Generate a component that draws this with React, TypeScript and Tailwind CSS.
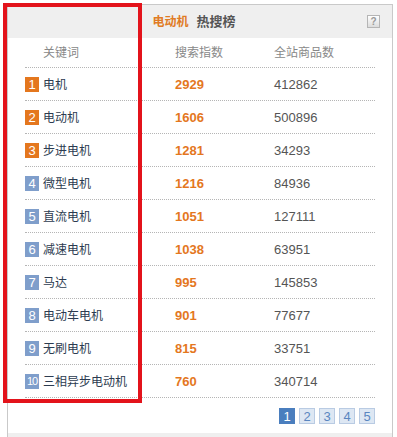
import React from "react";

const rows = [
  { k: "电机", s: "2929", g: "412862" },
  { k: "电动机", s: "1606", g: "500896" },
  { k: "步进电机", s: "1281", g: "34293" },
  { k: "微型电机", s: "1216", g: "84936" },
  { k: "直流电机", s: "1051", g: "127111" },
  { k: "减速电机", s: "1038", g: "63951" },
  { k: "马达", s: "995", g: "145853" },
  { k: "电动车电机", s: "901", g: "77677" },
  { k: "无刷电机", s: "815", g: "33751" },
  { k: "三相异步电动机", s: "760", g: "340714" },
];

export default function App() {
  return (
    <div
      className="relative w-[397px] h-[437px] overflow-hidden bg-white pt-[4px] pl-[7px]"
      style={{ fontFamily: '"Liberation Sans", "Noto Sans CJK SC", sans-serif' }}
    >
      <div className="w-[386px] border-t border-l border-r border-[#c9c9c9]">
        {/* header */}
        <div className="flex h-[33px] items-center bg-[#efefef]">
          <div className="flex-1" />
          <div className="flex items-center font-bold">
            <span className="text-[12px] text-[#e07b24]">电动机</span>
            <span className="ml-[8px] text-[13px] text-[#555]">热搜榜</span>
          </div>
          <div className="flex flex-1 justify-end pr-[12px]">
            <div className="flex h-[13px] w-[13px] items-center justify-center border border-[#b5b5b5] bg-gradient-to-b from-white to-[#dcdcdc] text-[10px] font-bold leading-none text-[#999]">
              ?
            </div>
          </div>
        </div>

        {/* table */}
        <div className="px-[17px]">
          <div className="grid h-[30px] grid-cols-[150px_99px_101px] items-center border-b border-dotted border-[#b5b5b5] text-[12px] text-[#888]">
            <div className="pl-[18px]">关键词</div>
            <div>搜索指数</div>
            <div>全站商品数</div>
          </div>
          {rows.map((r, i) => (
            <div
              key={i}
              className="grid h-[33px] grid-cols-[150px_99px_101px] items-center border-b border-dotted border-[#b5b5b5] pt-[1px]"
            >
              <div className="flex items-center">
                <span
                  className={
                    "flex h-[15px] w-[14px] items-center justify-center text-white leading-none " +
                    (i < 3 ? "bg-[#e4771e]" : "bg-[#7f9ecb]") +
                    (i === 9 ? " text-[11px] tracking-[-1px]" : " text-[13px]")
                  }
                >
                  {i + 1}
                </span>
                <span className="ml-[4px] text-[12px] text-[#2c3b50]">{r.k}</span>
              </div>
              <div className="text-[13px] font-bold text-[#e4771e]">{r.s}</div>
              <div className="text-[13px] text-[#555]">{r.g}</div>
            </div>
          ))}

          {/* pagination */}
          <div className="mt-[10px] flex justify-end gap-[4px]">
            {[1, 2, 3, 4, 5].map((p) => (
              <div
                key={p}
                className={
                  p === 1
                    ? "flex h-[16px] w-[16px] items-center justify-center bg-[#4a7ebe] text-[13px] leading-none text-white"
                    : "flex h-[16px] w-[16px] items-center justify-center border border-[#b9cbe3] bg-[#dde7f3] text-[13px] leading-none text-[#5a86c0]"
                }
              >
                {p}
              </div>
            ))}
          </div>
        </div>

        <div className="mt-[9px] h-[20px] bg-[#efefef]" />
      </div>

      {/* red annotation box */}
      <div className="pointer-events-none absolute left-[3px] top-[3px] h-[400px] w-[139px] border-[4px] border-[#e3131b]" />
    </div>
  );
}
